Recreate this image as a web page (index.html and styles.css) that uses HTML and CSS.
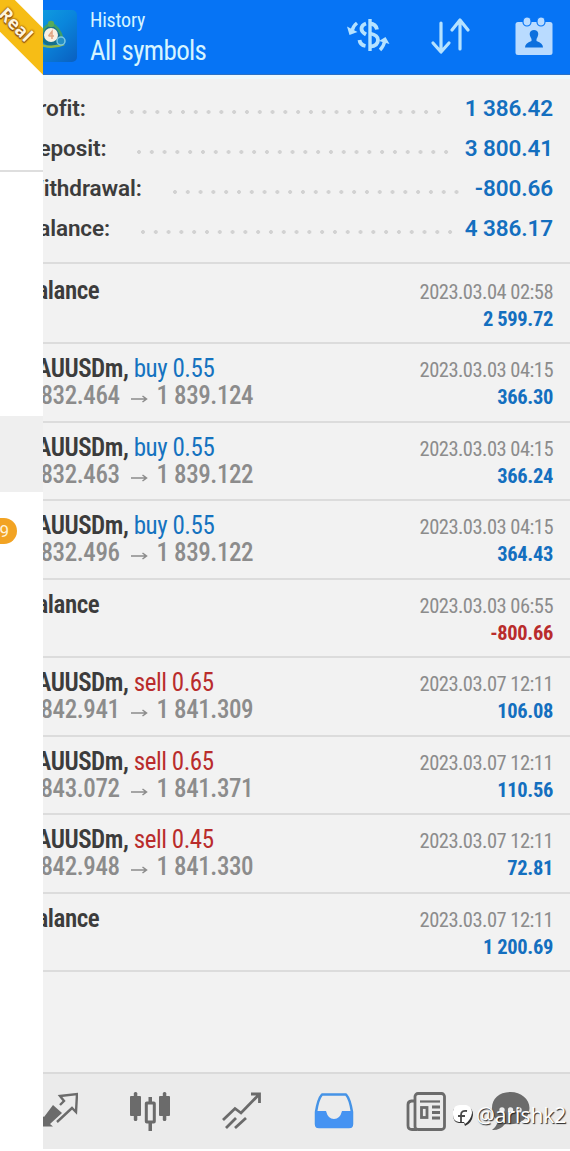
FILE: index.html
```html
<!DOCTYPE html>
<html lang="en">
<head>
    <meta charset="UTF-8">
    <meta name="viewport" content="width=device-width, initial-scale=1.0">
    <title>History</title>
    <link rel="stylesheet" href="styles.css">
</head>
<body>
    <div class="app">
        <header class="topbar">
            <svg class="logo" width="52" height="52" viewBox="0 0 52 52">
                <defs>
                    <linearGradient id="logoBg" x1="0" y1="0" x2="1" y2="1">
                        <stop offset="0" stop-color="#12a5e0"/>
                        <stop offset="0.5" stop-color="#0a86dc"/>
                        <stop offset="1" stop-color="#0a5fc0"/>
                    </linearGradient>
                </defs>
                <rect width="52" height="52" rx="5" fill="url(#logoBg)"/>
                <circle cx="26" cy="26" r="10" fill="#17708c"/>
                <path d="M13 34 Q17 16 26 14 Q34 16 38 30" fill="none" stroke="#3f9f6a" stroke-width="2.5"/>
                <circle cx="26" cy="14" r="3.2" fill="#58ab5a"/>
                <path d="M12 33 Q25 40 39 34" fill="none" stroke="#93b84a" stroke-width="2.5"/>
                <circle cx="36" cy="31" r="4" fill="#238fc5" stroke="#7cc8e4" stroke-width="1.5"/>
                <circle cx="26" cy="25" r="7" fill="#f8f0e4"/>
                <path d="M23.500 26 L27 21.500 V29 M23.500 26 H29" fill="none" stroke="#dfa584" stroke-width="1.5"/>
            </svg>
            <div class="heading">
                <div class="heading-small">History</div>
                <h1>All symbols</h1>
            </div>
            <div class="actions">
                <svg width="44" height="38" viewBox="0 0 44 38" fill="none" stroke="#b5e2ff" stroke-width="3.8">
                    <path d="M24 2 V34" stroke-width="3.4"/>
                    <path d="M20 6.500 Q15.500 8 15.500 12 Q15.500 15 20 17.500 M19.500 29 Q14 28 13.500 23"/>
                    <path d="M24 6.500 Q30 7 31 12.500 M24 16.500 Q32 18 32 23 Q32 29 24 29.500"/>
                    <path d="M11 6 Q7 9 6 14" stroke-width="3.4"/>
                    <path d="M34 33 Q38 29 39 23" stroke-width="3.4"/>
                    <path d="M1 9.500 L3.500 18 L11.500 15 Z M33 24 L39.500 20 L43.500 27 Z" fill="#b5e2ff" stroke="none"/>
                </svg>
                <svg width="40" height="38" viewBox="0 0 40 38" fill="none" stroke="#b5e2ff" stroke-width="3.200" stroke-linecap="round" stroke-linejoin="round">
                    <path d="M11 5 V33 M3 25 L11 34 L19 25"/>
                    <path d="M30 31 V3 M22 12 L30 2 L38 12"/>
                </svg>
                <svg width="38" height="40" viewBox="0 0 38 40">
                    <rect x="0.500" y="5" width="37" height="33" rx="2.500" fill="#b9dbff"/>
                    <rect x="8" y="0" width="8" height="9" rx="4" fill="#b9dbff" stroke="#0674f5" stroke-width="1.200"/>
                    <rect x="22" y="0" width="8" height="9" rx="4" fill="#b9dbff" stroke="#0674f5" stroke-width="1.200"/>
                    <path d="M19 13 C14.500 13 14 17 15.500 20 Q17 22 16.500 24 Q10 26 10 30.500 H28 Q28 26 21.500 24 Q21 22 22.500 20 C24 17 23.500 13 19 13 Z" fill="#0c6fdd"/>
                </svg>
            </div>
        </header>

        <section class="summary">
            <div class="summary-row profit"><span>Profit:</span><i class="dots"></i><b>1 386.42</b></div>
            <div class="summary-row deposit"><span>Deposit:</span><i class="dots"></i><b>3 800.41</b></div>
            <div class="summary-row withdrawal"><span>Withdrawal:</span><i class="dots"></i><b>-800.66</b></div>
            <div class="summary-row balance"><span>Balance:</span><i class="dots"></i><b>4 386.17</b></div>
        </section>

        <ul class="deals" id="deals"></ul>

        <nav class="tabs">
            <svg width="40" height="40" viewBox="0 0 40 40">
                <path d="M15 13 L24 21 L12 32 L15 34.500 H3 V23 L6 25 Z" fill="#6b6b6b"/>
                <path d="M22 13 L26 9 L22 4 L39 2 L38 20 L34 16 L19 30" fill="none" stroke="#6b6b6b" stroke-width="2.400"/>
            </svg>
            <svg width="40" height="40" viewBox="0 0 40 40" fill="#6b6b6b">
                <rect x="0" y="4" width="11" height="20" rx="1"/>
                <rect x="3.800" y="0" width="3.500" height="29" rx="1.500"/>
                <rect x="29" y="4" width="11" height="20" rx="1"/>
                <rect x="32.800" y="0" width="3.500" height="29" rx="1.500"/>
                <rect x="16.300" y="11" width="8" height="19" rx="0.500" fill="none" stroke="#6b6b6b" stroke-width="3"/>
                <path d="M18.500 5 h3.500 v6 h-3.500 z M18.500 30 h3.500 v9 h-3.500 z"/>
            </svg>
            <svg width="40" height="40" viewBox="0 0 40 40" fill="none" stroke="#6b6b6b" stroke-width="2.800">
                <path d="M1 28 L13 16.500 L19 21 L37 2.500 M29 2 H37.500 V11"/>
                <path d="M4 36 L14 26 M13 36 L24 26"/>
            </svg>
            <svg width="40" height="40" viewBox="0 0 40 40">
                <path d="M8 2.500 H32 Q36 7 38 20 V32 Q38 35 35 35 H5 Q2 35 2 32 V20 Q4 7 8 2.500 Z" fill="#ececec" stroke="#4593e6" stroke-width="2.500" stroke-linejoin="round"/>
                <path d="M1.500 19 H12 Q14 27 20 27 Q26 27 28 19 H38.500 V33 Q38.500 36 35.500 36 H4.500 Q1.500 36 1.500 33 Z" fill="#4593f2"/>
            </svg>
            <svg width="40" height="40" viewBox="0 0 40 40" fill="none" stroke="#6b6b6b" stroke-width="2.800">
                <rect x="9" y="1.500" width="29.500" height="36" rx="3"/>
                <path d="M9 9 H5.500 Q2 9.500 2 12.500 V33.500 Q2 37.500 6 37.500 H11"/>
                <path d="M14 9.500 H34" stroke-width="2.200"/>
                <rect x="15.500" y="15.500" width="5.500" height="10"/>
                <path d="M26 15 H34 M26 20.500 H34 M26 26 H34"/>
            </svg>
            <svg width="40" height="40" viewBox="0 0 40 40">
                <path d="M20.500 0 C9 0 2 7 2 16 C2 22 4.500 26 8 29 Q7 34 2 38 Q10 38.500 15 32 C29 34 39.500 27 39.500 16 C39.500 7 31 0 20.500 0 Z" fill="#6b6b6b"/>
                <g fill="#ececec"><circle cx="12" cy="18" r="2.700"/><circle cx="20.500" cy="18" r="2.700"/><circle cx="29" cy="18" r="2.700"/></g>
            </svg>
        </nav>
    </div>

    <!-- side drawer, slid almost out of view -->
    <aside class="drawer">
        <div class="drawer-head"><div class="ribbon">Real</div></div>
        <div class="drawer-active"></div>
        <span class="badge">9</span>
    </aside>

    <div class="watermark">
        <svg width="20" height="22" viewBox="0 0 20 22">
            <path d="M9 2 H14 Q20 4 20 11 Q19 19 12 22 L11 19 H6 Q0 18 0 11 V7 Q1 2 9 2 Z" fill="#333"/>
            <path d="M7 1 H13 Q19 2 19 9 Q18 16 12 20 L11 18 H6 Q0 17 0 11 V7 Q1 1 7 1 Z" fill="#fff"/>
            <path d="M8 18 V11 Q8 6 14 7 M5 12 H12" fill="none" stroke="#4a4a4a" stroke-width="1.800"/>
        </svg>
        <span>@arishk2</span>
    </div>

    <script>
        const deals = [
            { time: '2023.03.04 02:58', value: '2 599.72' },
            { side: 'buy', volume: '0.55', open: '1 832.464', close: '1 839.124', time: '2023.03.03 04:15', value: '366.30' },
            { side: 'buy', volume: '0.55', open: '1 832.463', close: '1 839.122', time: '2023.03.03 04:15', value: '366.24' },
            { side: 'buy', volume: '0.55', open: '1 832.496', close: '1 839.122', time: '2023.03.03 04:15', value: '364.43' },
            { time: '2023.03.03 06:55', value: '-800.66' },
            { side: 'sell', volume: '0.65', open: '1 842.941', close: '1 841.309', time: '2023.03.07 12:11', value: '106.08' },
            { side: 'sell', volume: '0.65', open: '1 843.072', close: '1 841.371', time: '2023.03.07 12:11', value: '110.56' },
            { side: 'sell', volume: '0.45', open: '1 842.948', close: '1 841.330', time: '2023.03.07 12:11', value: '72.81' },
            { time: '2023.03.07 12:11', value: '1 200.69' }
        ];

        const list = document.getElementById('deals');
        deals.forEach(deal => {
            const li = document.createElement('li');
            li.className = 'deal';
            const left = deal.side
                ? `<div class="symbol">XAUUSDm, <span class="${deal.side}">${deal.side} ${deal.volume}</span></div>
                   <div class="prices"><span>${deal.open}</span><svg width="17" height="10" viewBox="0 0 17 10"><path d="M0 5 H15 M11.500 2 L15.500 5 L11.500 8" fill="none" stroke="#8c8c8c" stroke-width="1.500"/></svg><span>${deal.close}</span></div>`
                : '<div class="symbol">Balance</div>';
            li.innerHTML = `<div class="deal-left">${left}</div>
                <div class="deal-right">
                    <div class="time">${deal.time}</div>
                    <div class="value ${deal.value[0] === '-' ? 'loss' : ''}">${deal.value}</div>
                </div>`;
            list.appendChild(li);
        });
    </script>
</body>
</html>
```
FILE: styles.css
```css
body {
    margin: 0;
    font-family: "Roboto Condensed", Roboto, sans-serif;
    font-stretch: 75%;
    background: #fff;
    color: #3c3c3c;
    overflow: hidden;
}
.app {
    display: flex;
    flex-direction: column;
    width: 570px;
    height: 1149px;
    background: #f2f2f2;
}
.topbar {
    display: flex;
    height: 75px;
    box-sizing: border-box;
    padding: 10px 17px 0 25px;
    background: #0674f5;
    border-bottom: 1px solid #2b72c5;
    box-shadow: 0 4px 0 #edf8fc;
    color: #d6f4ff;
}
.heading {
    margin-left: 13px;
}
.heading-small {
    font-size: 20px;
    line-height: 20px;
    letter-spacing: -0.2px;
}
h1 {
    margin: 5px 0 0;
    font-size: 27px;
    line-height: 32px;
    font-weight: 400;
    letter-spacing: -0.65px;
}
.actions {
    display: flex;
    margin-left: auto;
    padding-top: 7px;
}
.actions svg:nth-child(2) {
    margin: 1px 45px 0 40px;
}
.summary {
    box-sizing: border-box;
    height: 189px;
    padding: 13px 17px 0 24px;
    border-bottom: 2px solid #dcdcdc;
}
.summary-row {
    display: flex;
    height: 40px;
    line-height: 40px;
    font-family: Roboto, sans-serif;
    font-stretch: 100%;
    font-size: 22.5px;
    font-weight: 600;
    letter-spacing: -0.1px;
}
.summary-row b {
    font-weight: 600;
    color: #146fbf;
}
.dots {
    flex: 1;
    height: 4px;
    margin: 22px 18px 0 31px;
    background: radial-gradient(circle at 2px 2px, #d2d2d2 1.6px, transparent 2.2px) 0 0 / 12.8px 4px repeat-x;
}
.deposit .dots,
.balance .dots,
.withdrawal .dots {
    margin-right: 12px;
}
.deals {
    list-style: none;
    margin: 0;
    padding: 1.5px 0 0;
}
.deal {
    display: flex;
    justify-content: space-between;
    box-sizing: border-box;
    height: 78.5px;
    padding: 11px 17px 0 23px;
    border-bottom: 2px solid #dcdcdc;
}
.symbol {
    font-size: 25px;
    line-height: 27px;
    font-weight: 600;
    letter-spacing: -0.45px;
}
.symbol span {
    font-weight: 400;
}
.buy {
    color: #1573c0;
}
.sell {
    color: #b92c2c;
}
.prices {
    display: flex;
    align-items: center;
    font-size: 25px;
    line-height: 28px;
    font-weight: 500;
    letter-spacing: -0.4px;
    color: #8c8c8c;
}
.prices svg {
    margin: 6px 9px 0 11px;
}
.deal-right {
    text-align: right;
    padding-top: 2px;
}
.time {
    font-size: 20.5px;
    line-height: 27px;
    letter-spacing: -0.52px;
    color: #8c8c8c;
}
.value {
    font-size: 20.5px;
    line-height: 27px;
    font-weight: 700;
    letter-spacing: -0.35px;
    color: #146fbf;
}
.value.loss {
    color: #b92c2c;
}
.tabs {
    display: flex;
    gap: 52px;
    box-sizing: border-box;
    height: 77px;
    margin-top: auto;
    padding: 18px 0 0 38px;
    border-top: 2px solid #dadada;
    background: #ebebeb;
}
.tabs svg {
    flex: none;
}
.tabs svg:last-child {
    margin-left: -8px;
}
.drawer {
    position: absolute;
    top: 0;
    left: 0;
    width: 43px;
    height: 1151px;
    background: #fff;
    overflow: hidden;
}
.drawer-head {
    height: 170px;
    border-bottom: 2px solid #dedede;
}
.ribbon {
    position: absolute;
    top: 8px;
    left: -54px;
    width: 140px;
    height: 33px;
    background: #f6bd16;
    color: #fff5dc;
    font: 700 18px/33px "Open Sans", sans-serif;
    text-align: center;
    text-shadow: 0 0 2px #8a4a12, 0 0 2px #8a4a12, 1px 1px 1px #8a4a12;
    transform: rotate(45deg);
}
.drawer-active {
    height: 76px;
    margin-top: 244px;
    background: #efefef;
}
.badge {
    display: block;
    box-sizing: border-box;
    width: 34px;
    height: 26px;
    margin: 26px 0 0 -17px;
    padding-right: 8px;
    border-radius: 13px;
    background: #f2a323;
    color: #fff3d8;
    font: 17px/26px Roboto, sans-serif;
    text-align: right;
}
.watermark {
    position: absolute;
    left: 453px;
    top: 1103px;
    display: flex;
    align-items: center;
    gap: 3px;
    color: #fff;
    font: 21px/24px "Open Sans", sans-serif;
    text-shadow: 1px 1px 1px #222;
}
```
